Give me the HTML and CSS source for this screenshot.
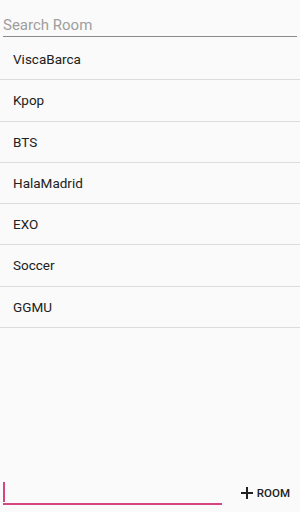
FILE: index.html
```html
<!DOCTYPE html>
<html lang="en">
<head>
    <meta charset="UTF-8">
    <meta name="viewport" content="width=device-width, initial-scale=1.0">
    <title>Rooms</title>
    <link rel="stylesheet" href="styles.css">
</head>
<body>

<div class="screen">
    <div class="search">
        <input type="text" class="search-input" placeholder="Search Room">
    </div>

    <ul class="rooms">
        <li class="room">ViscaBarca</li>
        <li class="room">Kpop</li>
        <li class="room">BTS</li>
        <li class="room">HalaMadrid</li>
        <li class="room">EXO</li>
        <li class="room">Soccer</li>
        <li class="room">GGMU</li>
    </ul>

    <div class="add-bar">
        <div class="new-room">
            <span class="caret"></span>
        </div>
        <button class="add-btn">
            <svg width="14" height="14" viewBox="0 0 14 14"><path d="M7 1v12M1 7h12" stroke="#212121" stroke-width="2"/></svg>
            <span>ROOM</span>
        </button>
    </div>
</div>

</body>
</html>
```

FILE: styles.css
```css
body{
    font-family:Roboto, "Noto Sans", sans-serif;
    background-color:#fafafa;
    margin:0;
    padding:0;
}
.screen{
    height:512px;
    display:flex;
    flex-direction:column;
}
.search{
    padding:13px 3px 0 3px;
}
.search-input{
    width:100%;
    box-sizing:border-box;
    border:none;
    border-bottom:1px solid #8a8a8a;
    background:transparent;
    font-family:inherit;
    font-size:15px;
    line-height:18px;
    padding:3px 0 2px 0;
    outline:none;
    color:#212121;
}
.search-input::placeholder{
    color:#9e9e9e;
}
.rooms{
    list-style:none;
    margin:2px 0 0 0;
    padding:0;
    flex:1;
}
.room{
    height:40.3px;
    line-height:41px;
    padding-left:13px;
    font-size:13.5px;
    color:#212121;
    border-bottom:1px solid #dcdcdc;
}
.add-bar{
    display:flex;
    align-items:flex-end;
    padding:0 10px 7px 3px;
}
.new-room{
    width:219px;
    height:22px;
    border-bottom:2px solid #d6457f;
    position:relative;
}
.caret{
    position:absolute;
    left:0;
    top:1px;
    width:2px;
    height:20px;
    background:#d6457f;
}
.add-btn{
    margin-left:auto;
    display:flex;
    align-items:center;
    gap:3px;
    border:none;
    background:none;
    padding:0 0 5px 0;
    font-family:inherit;
    font-size:11.5px;
    font-weight:500;
    color:#212121;
}
```
